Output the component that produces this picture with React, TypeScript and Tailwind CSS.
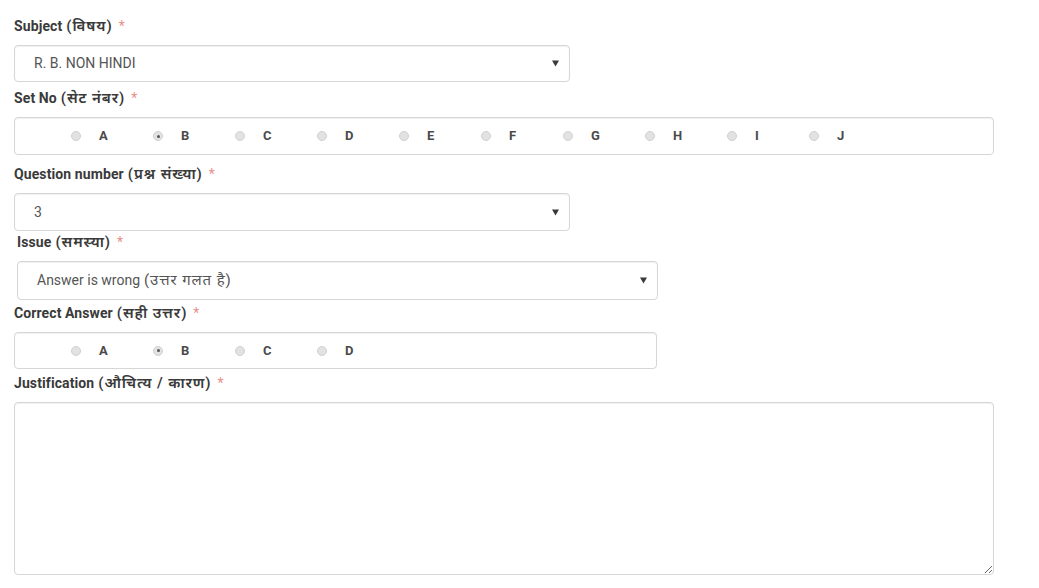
import React from "react";

const font = { fontFamily: 'Roboto, "Noto Sans", "Noto Sans Devanagari", "Lohit Devanagari", sans-serif' };

const Label: React.FC<{ en: string; hi: string; className?: string }> = ({ en, hi, className }) => (
    <div className={`h-[18px] mb-[10px] flex items-center text-[14px] font-bold text-[#3a3a3a] tracking-[0.1px] ${className || ""}`}>
        <span>{en}</span>
        <span className="ml-[4px] text-[15px] font-semibold tracking-[0.9px]">({hi})</span>
        <span className="ml-[6px] text-[#e8908c] font-normal">*</span>
    </div>
);

const Select: React.FC<{ value: string; hi?: string; className: string }> = ({ value, hi, className }) => (
    <div
        className={`flex items-center justify-between pl-[19px] pr-[10px] bg-white border border-[#d6d6d6] rounded-[4px] shadow-[inset_0_1px_1px_rgba(0,0,0,0.06)] text-[14px] text-[#555] ${className}`}
    >
        <span>
            {value}
            {hi && <span className="ml-[4px] text-[15px] tracking-[0.9px]">({hi})</span>}
        </span>
        <svg width="7" height="7" viewBox="0 0 7 7">
            <path d="M0 0.5 L7 0.5 L3.5 6.5 Z" fill="#3a3a3a" />
        </svg>
    </div>
);

const RadioRow: React.FC<{ options: string[]; checked: string; className: string }> = ({ options, checked, className }) => (
    <div
        className={`flex items-center pl-[56px] bg-white border border-[#d6d6d6] rounded-[4px] shadow-[inset_0_1px_1px_rgba(0,0,0,0.06)] ${className}`}
    >
        {options.map((o) => (
            <div key={o} className="w-[82px] flex items-center">
                <span className="w-[10px] h-[10px] rounded-full bg-[#e2e2e2] border border-[#d0d0d0] flex items-center justify-center">
                    {o === checked && <span className="w-[3px] h-[3px] rounded-full bg-[#555]" />}
                </span>
                <span className="ml-[18px] text-[13px] font-bold text-[#4a4a4a]">{o}</span>
            </div>
        ))}
    </div>
);

const App: React.FC = () => {
    return (
        <div className="w-[1039px] h-[588px] bg-white pl-[14px] pt-[17px]" style={font}>
            <Label en="Subject" hi="विषय" />
            <Select value="R. B. NON HINDI" className="w-[556px] h-[37px]" />

            <Label en="Set No" hi="सेट नंबर" className="mt-[7px]" />
            <RadioRow
                options={["A", "B", "C", "D", "E", "F", "G", "H", "I", "J"]}
                checked="B"
                className="w-[980px] h-[38px]"
            />

            <Label en="Question number" hi="प्रश्न संख्या" className="mt-[10px]" />
            <Select value="3" className="w-[556px] h-[38px]" />

            <Label en="Issue" hi="समस्या" className="mt-[2px] ml-[3px]" />
            <Select value="Answer is wrong" hi="उत्तर गलत है" className="ml-[3px] w-[641px] h-[39px]" />

            <Label en="Correct Answer" hi="सही उत्तर" className="mt-[4px]" />
            <RadioRow options={["A", "B", "C", "D"]} checked="B" className="w-[643px] h-[37px]" />

            <Label en="Justification" hi="औचित्य / कारण" className="mt-[5px]" />
            <textarea
                className="block w-[980px] h-[173px] bg-white border border-[#d6d6d6] rounded-[4px] shadow-[inset_0_1px_1px_rgba(0,0,0,0.06)] outline-none"
                defaultValue=""
            />
        </div>
    );
};

export default App;
